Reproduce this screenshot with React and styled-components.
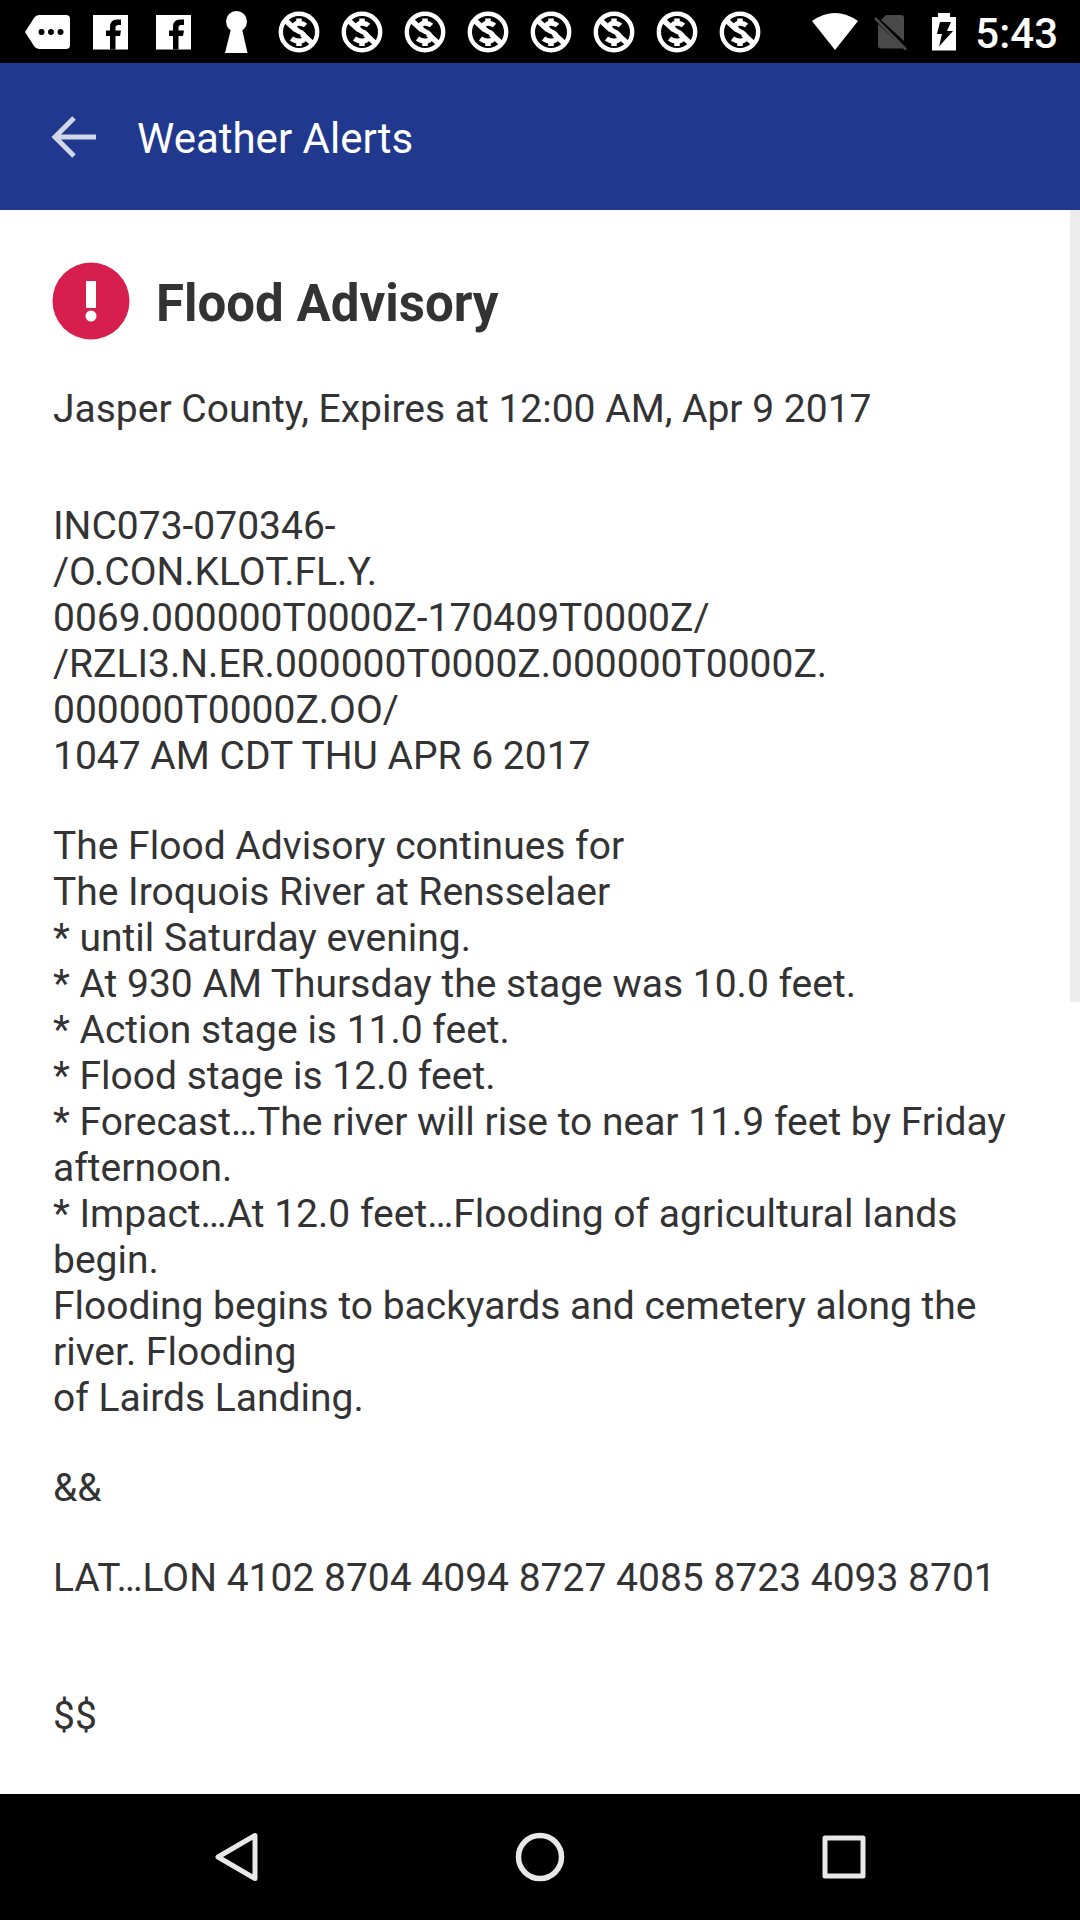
import React from "react";
import styled, { createGlobalStyle } from "styled-components";

const GlobalStyle = createGlobalStyle`
  *, *::before, *::after { box-sizing: border-box; }
  body { margin: 0; background: #fff; }
  h1, h2, p { margin: 0; }
`;

const Screen = styled.div`
  display: flex;
  flex-direction: column;
  min-height: 100vh;
  background: #fff;
  color: #333;
  font-family: Roboto, "Noto Sans", sans-serif;
`;

const StatusBar = styled.div`
  display: flex;
  align-items: center;
  justify-content: space-between;
  height: 63px;
  padding: 0 22px 0 15px;
  background: #000;
  color: #fff;
`;

const Notifications = styled.div`
  display: flex;
`;

const NotificationCell = styled.span`
  display: grid;
  place-items: center;
  width: 63px;
  height: 63px;
`;

const SystemTray = styled.div`
  display: flex;
  align-items: center;
`;

const TrayIcon = styled.svg`
  display: block;
  width: ${(p) => p.$width}px;
  height: 42px;
  margin-right: ${(p) => p.$gap}px;
`;

const Clock = styled.time`
  font-size: 42px;
  line-height: 48px;
  font-weight: 500;
  padding-top: 4px;
`;

const AppBar = styled.header`
  display: flex;
  align-items: center;
  gap: 41px;
  height: 147px;
  padding: 0 50px;
  background: #20398e;
  color: #fff;
`;

const IconButton = styled.button`
  display: grid;
  place-items: center;
  padding: 0;
  border: 0;
  background: none;
  color: inherit;
`;

const BarTitle = styled.h1`
  padding-top: 4px;
  font-size: 42px;
  line-height: 48px;
  font-weight: 400;
`;

const Content = styled.main`
  position: relative;
  flex: 1;
  padding: 52px 52px 48px;
`;

const ScrollThumb = styled.div`
  position: absolute;
  top: 0;
  right: 0;
  width: 10px;
  height: 50%;
  background: #ececec;
`;

const AlertHeading = styled.div`
  display: flex;
  align-items: center;
  gap: 26px;
`;

const AlertTitle = styled.h2`
  padding-top: 6px;
  font-size: 51px;
  line-height: 60px;
  font-weight: 700;
`;

const Text = styled.p`
  padding-left: 1px;
  font-size: 39px;
  line-height: 46px;
  white-space: pre-line;
`;

const Summary = styled(Text)`
  margin-top: 46px;
`;

const Bulletin = styled.article`
  display: flex;
  flex-direction: column;
  gap: 44px;
  margin-top: 71px;
`;

const Closing = styled(Text)`
  margin-top: 48px;
`;

const NavBar = styled.nav`
  display: flex;
  justify-content: center;
  height: 126px;
  background: #000;
  color: #e8e8e8;
`;

const NavButton = styled(IconButton)`
  width: 304px;
`;

const MoreTag = () => (
  <svg width="46" height="42" viewBox="0 0 46 42" aria-hidden="true">
    <path d="M15 4H42Q46 4 46 8V34Q46 38 42 38H15Q12 38 10 35L1 21L10 7Q12 4 15 4Z" fill="#fff" />
    <circle cx="17.5" cy="21" r="3" />
    <circle cx="27" cy="21" r="3" />
    <circle cx="36.5" cy="21" r="3" />
  </svg>
);

const Facebook = () => (
  <svg width="36" height="42" viewBox="0 0 36 42" aria-hidden="true">
    <rect x="1" y="4" width="35" height="34.500" fill="#fff" />
    <path d="M18 38.500V25H14V19.500H18V16Q18 8.500 25 8.500H29V14H26Q23.500 14 23.500 16.500V19.500H29L28 25H23.500V38.500Z" fill="#000" />
  </svg>
);

const Keyhole = () => (
  <svg width="24" height="42" viewBox="0 0 24 42" aria-hidden="true">
    <circle cx="12.500" cy="10.500" r="10.500" fill="#fff" />
    <path d="M7 18H18L23.500 42H1Z" fill="#fff" />
  </svg>
);

const MoneyOff = () => (
  <svg width="42" height="42" viewBox="0 0 42 42" fill="none" stroke="#fff" aria-hidden="true">
    <circle cx="21" cy="21" r="18.200" strokeWidth="4.400" />
    <path d="M6.500 8.500L18 19M24 23L35 33" strokeWidth="5.500" />
    <path d="M27.500 14.500Q25 12.200 21 12.200Q16.500 12.200 16.500 15.500Q16.500 18.500 21 20.500Q26.500 22.800 26.500 26.500Q26.500 30 21 30Q16.500 30 13.500 27.500" strokeWidth="5" />
    <path d="M21 7.500V12M21 30V35" strokeWidth="5.500" />
  </svg>
);

const notifications = [
  MoreTag, Facebook, Facebook, Keyhole,
  MoneyOff, MoneyOff, MoneyOff, MoneyOff,
  MoneyOff, MoneyOff, MoneyOff, MoneyOff,
];

const codes = `INC073-070346-
/O.CON.KLOT.FL.Y.
0069.000000T0000Z-170409T0000Z/
/RZLI3.N.ER.000000T0000Z.000000T0000Z.
000000T0000Z.OO/
1047 AM CDT THU APR 6 2017`;

const details = `The Flood Advisory continues for
The Iroquois River at Rensselaer
* until Saturday evening.
* At 930 AM Thursday the stage was 10.0 feet.
* Action stage is 11.0 feet.
* Flood stage is 12.0 feet.
* Forecast…The river will rise to near 11.9 feet by Friday afternoon.
* Impact…At 12.0 feet…Flooding of agricultural lands begin.
Flooding begins to backyards and cemetery along the river. Flooding
of Lairds Landing.`;

export default function App() {
  return (
    <Screen>
      <GlobalStyle />
      <StatusBar>
        <Notifications>
          {notifications.map((Icon, i) => (
            <NotificationCell key={i}><Icon /></NotificationCell>
          ))}
        </Notifications>
        <SystemTray>
          <TrayIcon $width={48} $gap={14} viewBox="0 0 48 42" aria-hidden="true">
            <path d="M1 10Q24 -6 47 10L24 39Z" fill="#fff" />
          </TrayIcon>
          <TrayIcon $width={36} $gap={22} viewBox="0 0 36 42" aria-hidden="true">
            <path d="M13 4H28Q31 4 31 7V30L8 9ZM5 13L31 37.500H8Q5 37.500 5 34.500Z" fill="#4a4a4a" />
            <path d="M2 7L33 38.500" stroke="#4a4a4a" strokeWidth="2.500" />
          </TrayIcon>
          <TrayIcon $width={26} $gap={18} viewBox="0 0 26 42" aria-hidden="true">
            <path d="M7 2H19V6H25V39.500H1V6H7Z" fill="#fff" />
            <path d="M9 11H20L16 20H22L8 35.500L11 23H6Z" fill="#000" />
          </TrayIcon>
          <Clock>5:43</Clock>
        </SystemTray>
      </StatusBar>

      <AppBar>
        <IconButton type="button" aria-label="Back">
          <svg width="46" height="46" viewBox="0 0 46 46" fill="none" stroke="#d2d7e8" strokeWidth="5" aria-hidden="true">
            <path d="M24 4L5 23L24 42M5 23H46" />
          </svg>
        </IconButton>
        <BarTitle>Weather Alerts</BarTitle>
      </AppBar>

      <Content>
        <ScrollThumb />
        <AlertHeading>
          <svg width="78" height="78" viewBox="0 0 78 78" aria-hidden="true">
            <circle cx="39" cy="39" r="38.500" fill="#d61f4c" />
            <rect x="34" y="19" width="10" height="27" fill="#fff" />
            <circle cx="39" cy="54" r="5.500" fill="#fff" />
          </svg>
          <AlertTitle>Flood Advisory</AlertTitle>
        </AlertHeading>
        <Summary>Jasper County, Expires at 12:00 AM, Apr 9 2017</Summary>
        <Bulletin>
          <Text>{codes}</Text>
          <Text>{details}</Text>
          <Text>&amp;&amp;</Text>
          <Text>LAT…LON 4102 8704 4094 8727 4085 8723 4093 8701</Text>
          <Closing>$$</Closing>
        </Bulletin>
      </Content>

      <NavBar aria-label="System">
        <NavButton type="button" aria-label="Back">
          <svg width="50" height="50" viewBox="0 0 50 50" fill="none" stroke="currentColor" strokeWidth="5" strokeLinejoin="round" aria-hidden="true">
            <path d="M44 3.500V46.500L7 25Z" />
          </svg>
        </NavButton>
        <NavButton type="button" aria-label="Home">
          <svg width="50" height="50" viewBox="0 0 50 50" fill="none" stroke="currentColor" strokeWidth="5.500" aria-hidden="true">
            <circle cx="25" cy="25" r="21.500" />
          </svg>
        </NavButton>
        <NavButton type="button" aria-label="Recent apps">
          <svg width="50" height="50" viewBox="0 0 50 50" fill="none" stroke="currentColor" strokeWidth="5" strokeLinejoin="round" aria-hidden="true">
            <rect x="6" y="6" width="38" height="38" />
          </svg>
        </NavButton>
      </NavBar>
    </Screen>
  );
}
